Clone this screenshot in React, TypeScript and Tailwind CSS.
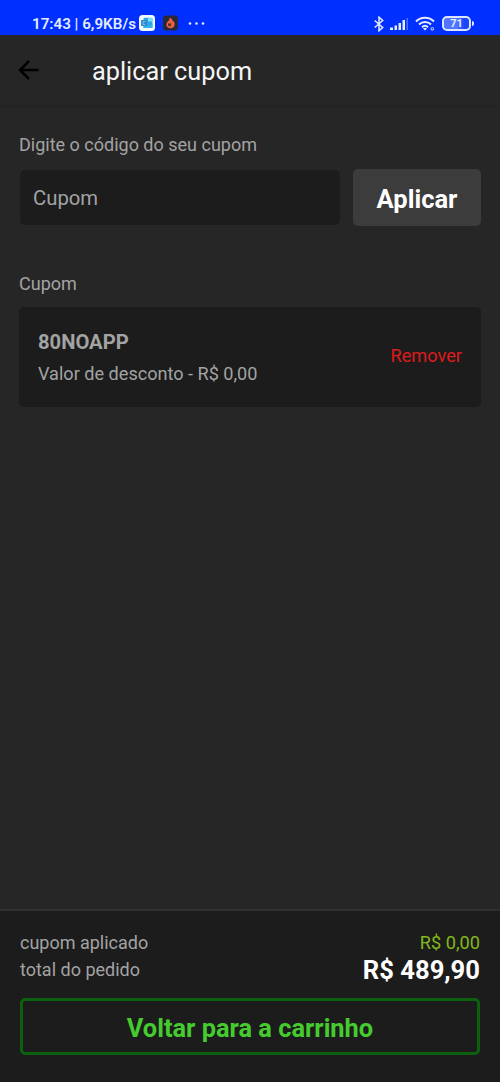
import { useState } from 'react';

function formatPrice(value: number) {
  return `R$ ${value.toFixed(2).replace('.', ',')}`;
}

function StatusBar() {
  return (
    <div className="flex h-[35px] shrink-0 items-end justify-between bg-[#0030ff] pb-[3px] pl-8 pr-[26px] text-[#e4ecff]">
      <div className="flex h-[17px] items-center">
        <span className="whitespace-nowrap pt-px text-[15.2px] font-semibold leading-[17px]">17:43 | 6,9KB/s</span>
        <svg className="mb-px ml-[3px] h-4 w-4" viewBox="0 0 16 16">
          <rect width="16" height="16" rx="3.5" fill="#f3f9ff" />
          <rect x="4.5" y="2.8" width="9" height="10.2" rx="1" fill="#28a8ea" />
          <path d="M9 3h4.5v3.5H9z" fill="#7fdcfb" />
          <path d="m4.5 9 4.5 2.500 4.500-2.500v4h-9z" fill="#32b5ee" />
          <rect x="2" y="5" width="6" height="6" rx="0.8" fill="#3487cf" />
          <path d="M6 6.500H4v3h2" fill="none" stroke="#7cc0ec" />
        </svg>
        <svg className="mb-px ml-2 h-4 w-[15px]" viewBox="0 0 16 16">
          <rect width="16" height="16" rx="3.5" fill="#29283a" />
          <path
            d="M7 2c3 1.3 3.2 3.2 3.7 4.6l.7-.8c1.2 2 1.500 4.200.3 5.900-1.600 2.400-6.400 2.500-7.700-.3C3 9.100 4 7.300 5.400 6 6.700 4.800 7.400 3.600 7 2z"
            fill="#f0603c"
          />
          <path d="M6 8c.6 1 1.800.8 2.300 0 .6 1 .6 2.600-.4 3.400-1.200.6-2.600-.3-2.600-1.500C5.300 9 5.600 8.600 6 8z" fill="#4a2c38" />
        </svg>
        <svg className="ml-[10px] h-4 w-[18px]" viewBox="0 0 18 16" fill="currentColor">
          <circle cx="2" cy="7.5" r="1.3" />
          <circle cx="8.5" cy="7.5" r="1.3" />
          <circle cx="15" cy="7.5" r="1.3" />
        </svg>
      </div>

      <div className="flex h-[17px] items-center">
        <svg className="h-4 w-[10px]" viewBox="0 0 10 16" fill="none" stroke="currentColor" strokeWidth="1.5">
          <path d="m.7 4.500 8 7L5 14.800V1.200l3.700 3.300-8 7" />
        </svg>
        <svg className="ml-[6px] h-[14px] w-5" viewBox="0 0 20 14" fill="currentColor">
          <rect x="0" y="10.5" width="3" height="2.5" />
          <rect x="4.5" y="8.5" width="2.5" height="4.5" />
          <rect x="8.5" y="6" width="2.5" height="7" />
          <rect x="12.5" y="3" width="2.5" height="10" />
          <rect x="16.5" y="1" width="1.5" height="12" opacity="0.35" />
        </svg>
        <svg className="ml-[5px] h-[15px] w-5" viewBox="0 0 20 15" fill="none" stroke="currentColor" strokeWidth="2">
          <path d="M1 5.500c5-5 13-5 18 0M4 8.500c3.300-3.300 8.700-3.300 12 0M7 11.300c1.800-1.800 4.200-1.800 6 0" />
          <path d="m10 14.500-2-2q2-1.500 4 0z" fill="currentColor" stroke="none" />
          <circle cx="17.3" cy="12.8" r="1.3" strokeWidth="1.2" opacity="0.7" />
        </svg>
        <div className="ml-[7px] flex items-center">
          <div className="flex h-[15px] w-[29px] items-center justify-center rounded-[5px] border-2 border-[#dbe5ff] bg-gradient-to-r from-[#5274ff] from-50% to-[#1c46fb] to-80% text-[11px] font-bold leading-none">
            71
          </div>
          <div className="ml-px h-[5px] w-[2px] rounded-r bg-[#dbe5ff]" />
        </div>
      </div>
    </div>
  );
}

export default function App() {
  const [code, setCode] = useState('');
  const [coupon, setCoupon] = useState<string | null>('80NOAPP');

  function handleSubmit(e: React.FormEvent) {
    e.preventDefault();
    if (!code.trim()) return;
    setCoupon(code.trim().toUpperCase());
    setCode('');
  }

  return (
    <div className="flex h-[1082px] w-[500px] flex-col bg-[#262626] font-[Roboto,sans-serif] text-[#a3a3a3]">
      <StatusBar />

      <header className="flex h-[72px] shrink-0 items-center border-b border-[#212121] pl-[18px]">
        <button aria-label="Voltar" className="mb-px text-black">
          <svg className="h-5 w-[21px]" viewBox="0 0 21 20" fill="none" stroke="currentColor" strokeWidth="2.5">
            <path d="M20.500 10H2M11 1l-9 9 9 9" />
          </svg>
        </button>
        <h1 className="ml-[53px] pt-[2px] text-[25.3px] text-[#f5f5f5]">aplicar cupom</h1>
      </header>

      <main className="flex-1 px-[19px] pt-[26px]">
        <form onSubmit={handleSubmit}>
          <label htmlFor="cupom" className="block text-[18px] leading-6">
            Digite o código do seu cupom
          </label>
          <div className="mt-3 flex h-[57px] items-center">
            <input
              id="cupom"
              value={code}
              onChange={(e) => setCode(e.target.value)}
              placeholder="Cupom"
              className="mb-px ml-px h-[55px] w-[320px] rounded-[5px] bg-[#1c1c1c] px-[13px] pt-[2px] text-[20.3px] outline-none placeholder:text-[#a3a3a3]"
            />
            <button
              type="submit"
              className="ml-[13px] h-[57px] flex-1 rounded-[5px] bg-[#3c3c3c] pt-[4px] text-[25.5px] font-bold text-white"
            >
              Aplicar
            </button>
          </div>
        </form>

        <h2 className="mt-[46px] text-[18px] leading-6">Cupom</h2>
        {coupon && (
          <div className="mt-[11px] flex h-[100px] items-center justify-between rounded-[5px] bg-[#1c1c1c] px-[19px]">
            <div className="pt-[2px]">
              <p className="text-[20.2px] font-bold leading-8">{coupon}</p>
              <p className="text-[18.1px] leading-8">Valor de desconto - {formatPrice(0)}</p>
            </div>
            <button onClick={() => setCoupon(null)} className="mb-[2px] text-[18.2px] text-[#de1b1b]">
              Remover
            </button>
          </div>
        )}
      </main>

      <footer className="h-[173px] shrink-0 border-t-2 border-[#303030] bg-[#1c1c1c] px-5 pt-[18px]">
        <div className="flex h-[27px] items-center justify-between text-[18px]">
          <span>cupom aplicado</span>
          <span className="text-[18.2px] text-[#83b81a]">{formatPrice(0)}</span>
        </div>
        <div className="flex h-[27px] items-center justify-between text-[18px]">
          <span>total do pedido</span>
          <span className="pt-[2px] text-[25.6px] font-bold text-white">{formatPrice(489.9)}</span>
        </div>
        <button className="mt-[15px] h-[57px] w-full rounded-[5px] border-[3px] border-[#0c610f] pt-[4px] text-[25.4px] font-bold text-[#45cb2e]">
          Voltar para a carrinho
        </button>
      </footer>
    </div>
  );
}
